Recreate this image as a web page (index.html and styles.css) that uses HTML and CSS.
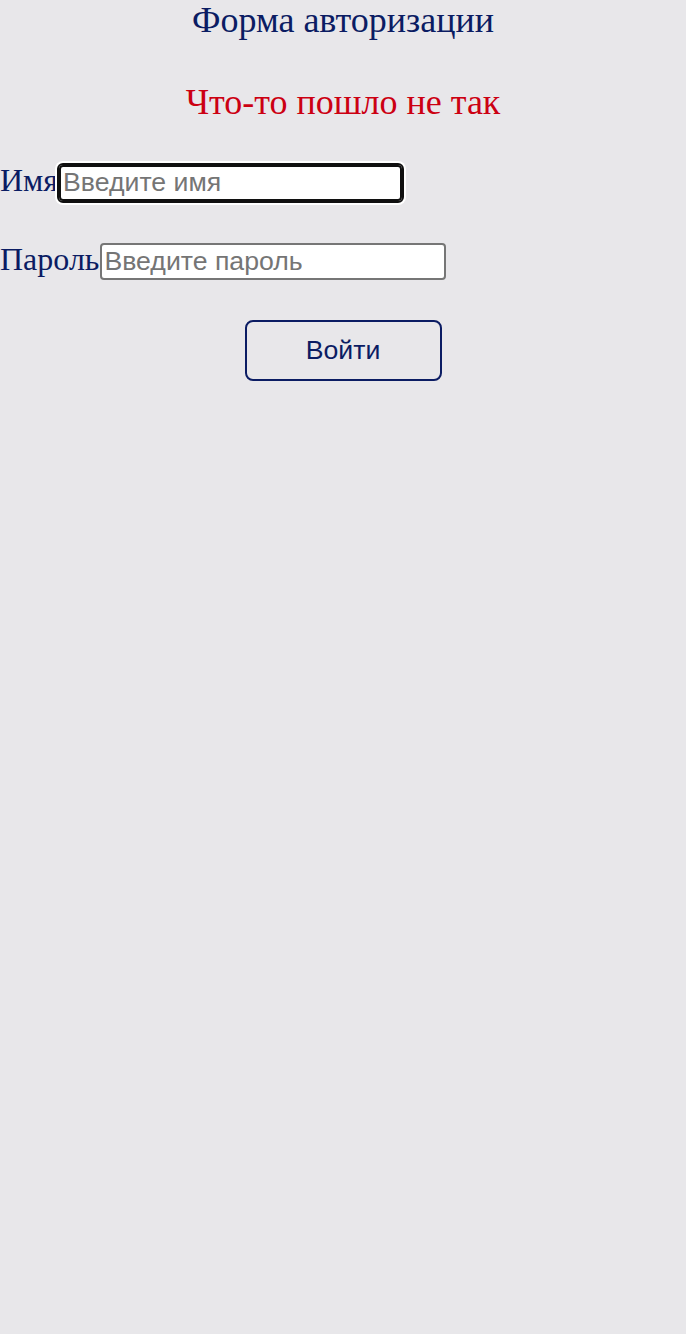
FILE: index.html
```html
<!DOCTYPE html>
<html lang="ru">
<head>
<meta charset="utf-8">
<title>Форма авторизации</title>
<link rel="stylesheet" href="styles.css">
</head>
<body>
<main class="page">
  <h1 class="title">Форма авторизации</h1>
  <p class="error">Что-то пошло не так</p>
  <form class="form">
    <div class="row row-name">
      <label class="label" for="name">Имя</label>
      <input class="field field-focused" id="name" type="text" placeholder="Введите имя">
    </div>
    <div class="row row-pass">
      <label class="label" for="pass">Пароль</label>
      <input class="field" id="pass" type="password" placeholder="Введите пароль">
    </div>
    <div class="actions">
      <button class="submit" type="button">Войти</button>
    </div>
  </form>
</main>
</body>
</html>
```

FILE: styles.css
```css
html, body {
  margin: 0;
  padding: 0;
  background: #e8e7ea;
}

.page {
  display: flex;
  flex-direction: column;
  font-family: "Liberation Serif", "Times New Roman", serif;
  color: #0b1c63;
}

.title {
  margin: 0;
  font-size: 36px;
  line-height: 40px;
  font-weight: normal;
  text-align: center;
}

.error {
  margin: 40px 0 0;
  font-size: 36px;
  line-height: 44px;
  color: #cc0012;
  text-align: center;
}

.form {
  display: flex;
  flex-direction: column;
}

.row {
  display: flex;
  align-items: baseline;
}

.row-name {
  margin-top: 38px;
}

.row-pass {
  margin-top: 40px;
}

.label {
  font-size: 32px;
  line-height: 36px;
}

.field {
  box-sizing: border-box;
  width: 346px;
  height: 37px;
  margin: 0 0 0 1px;
  padding: 1px 2px;
  border: 2px solid #767676;
  border-radius: 4px;
  background: #fff;
  font-family: "Liberation Sans", Arial, sans-serif;
  font-size: 26.67px;
  color: #000;
  outline: none;
}

.field::placeholder {
  color: #757575;
}

.field-focused {
  width: 343px;
  height: 36px;
  margin-left: 1px;
  border-color: #101010;
  outline: 2px solid #101010;
  box-shadow: 0 0 0 4px #fff;
}

.actions {
  display: flex;
  justify-content: center;
  margin-top: 40px;
}

.submit {
  box-sizing: border-box;
  width: 197px;
  height: 61px;
  margin: 0;
  border: 2px solid #0b1c63;
  border-radius: 8px;
  background: transparent;
  font-family: "Liberation Sans", Arial, sans-serif;
  font-size: 26.67px;
  color: #0b1c63;
}
```
